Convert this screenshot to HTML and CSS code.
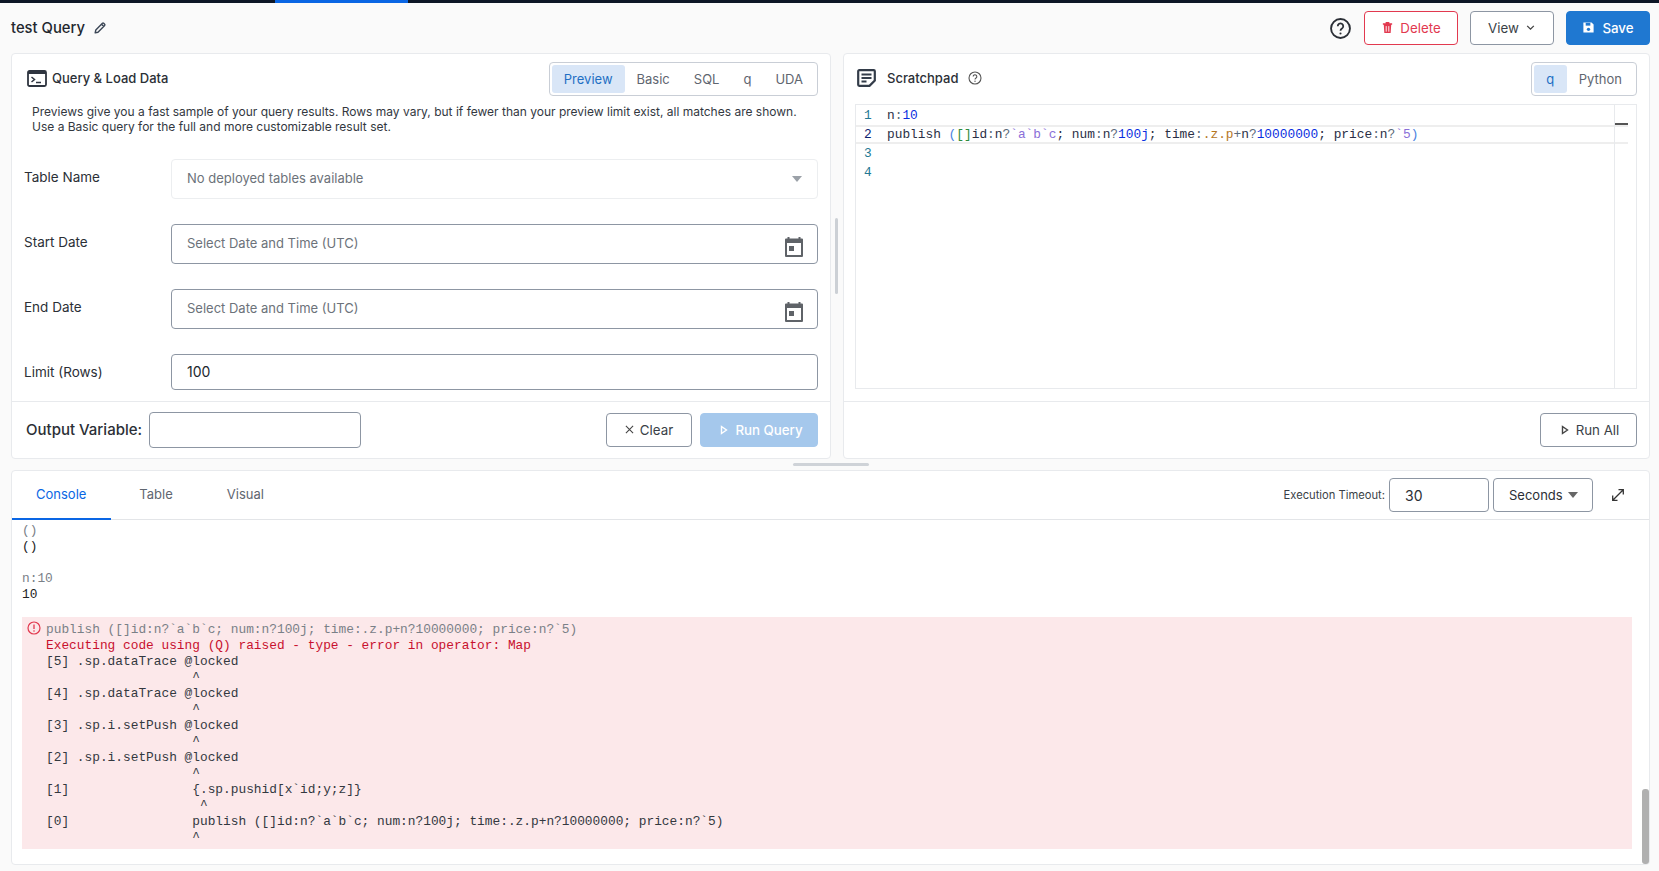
FILE: index.html
```html
<!DOCTYPE html>
<html lang="en">
<head>
<meta charset="utf-8">
<title>test Query</title>
<link rel="stylesheet" href="styles.css">
</head>
<body>
<div class="topbar"><span class="topbar-active"></span></div>
<header class="page-head">
  <div class="title">test Query
    <svg class="pencil" viewBox="0 0 16 16" width="14" height="14"><path d="M2.5 13.5l.7-3.2 7.6-7.6a1 1 0 0 1 1.4 0l1.1 1.1a1 1 0 0 1 0 1.4l-7.6 7.6zM9.8 3.8l2.4 2.4" fill="none" stroke="#3b4656" stroke-width="1.6" stroke-linejoin="round"/></svg>
  </div>
  <div class="actions">
    <svg class="help" viewBox="0 0 20 20" width="21" height="21"><circle cx="10" cy="10" r="9" fill="none" stroke="#2b2f36" stroke-width="1.800"/><path d="M7.400 7.800a2.600 2.600 0 1 1 4 2.200c-.9.600-1.400 1-1.400 2.100" fill="none" stroke="#2b2f36" stroke-width="1.700"/><circle cx="10" cy="14.700" r="1" fill="#2b2f36"/></svg>
    <button class="btn btn-delete"><svg viewBox="0 0 14 14" width="13" height="13"><path d="M3 4h8l-.6 9H3.600zM2 2.500h10V4H2zM5 1h4v1.500H5z" fill="#e2394f"/><path d="M5.600 5.500v6M8.400 5.500v6" stroke="#fff" stroke-width="1"/></svg>Delete</button>
    <button class="btn btn-view">View<svg viewBox="0 0 10 10" width="11" height="11"><path d="M2 3.500l3 3 3-3" fill="none" stroke="#444" stroke-width="1.200"/></svg></button>
    <button class="btn btn-save"><svg viewBox="0 0 14 14" width="13" height="13"><path d="M1.500 1.500h8.800l2.200 2.200v8.800h-11z" fill="#fff"/><path d="M4 2h5v3H4z" fill="#1f78d1"/><circle cx="7" cy="9" r="1.800" fill="#1f78d1"/></svg>Save</button>
  </div>
</header>

<main class="top-panels">
  <section class="card">
    <div class="card-head">
      <div class="card-title">
        <svg viewBox="0 0 20 17" width="20" height="17"><rect x="1" y="1" width="18" height="15" rx="1.500" fill="none" stroke="#2f3540" stroke-width="1.800"/><rect x="1" y="1" width="18" height="3" fill="#2f3540"/><path d="M4.500 7l3 2.500-3 2.500M9 12.500h5" fill="none" stroke="#2f3540" stroke-width="1.500"/></svg>
        <span>Query &amp; Load Data</span>
      </div>
      <div class="seg">
        <span class="seg-item seg-on">Preview</span><span class="seg-item">Basic</span><span class="seg-item">SQL</span><span class="seg-item">q</span><span class="seg-item">UDA</span>
      </div>
    </div>
    <p class="desc">Previews give you a fast sample of your query results. Rows may vary, but if fewer than your preview limit exist, all matches are shown.<br>Use a Basic query for the full and more customizable result set.</p>
    <div class="form">
      <div class="row"><label class="lbl lbl-up">Table Name</label><div class="field field-off"><span class="ph">No deployed tables available</span><i class="caret"></i></div></div>
      <div class="row"><label class="lbl lbl-up">Start Date</label><div class="field"><span class="ph">Select Date and Time (UTC)</span>
        <svg class="cal" viewBox="0 0 18 20" width="18" height="20"><path d="M1 2.500h16V19H1z" fill="none" stroke="#5f6368" stroke-width="2" stroke-linejoin="round"/><path d="M1 2h16v4H1zM2.500 0h2v2h-2zM13.500 0h2v2h-2zM4 9h5v5H4z" fill="#5f6368"/></svg></div></div>
      <div class="row"><label class="lbl lbl-up">End Date</label><div class="field"><span class="ph">Select Date and Time (UTC)</span>
        <svg class="cal" viewBox="0 0 18 20" width="18" height="20"><path d="M1 2.500h16V19H1z" fill="none" stroke="#5f6368" stroke-width="2" stroke-linejoin="round"/><path d="M1 2h16v4H1zM2.500 0h2v2h-2zM13.500 0h2v2h-2zM4 9h5v5H4z" fill="#5f6368"/></svg></div></div>
      <div class="row row-short"><label class="lbl">Limit (Rows)</label><div class="field"><span class="val">100</span></div></div>
    </div>
    <div class="card-foot">
      <label class="out-lbl">Output Variable:</label>
      <div class="out-input"></div>
      <div class="foot-btns">
        <button class="btn btn-clear"><svg viewBox="0 0 10 10" width="9" height="9"><path d="M1 1l8 8M9 1l-8 8" stroke="#444" stroke-width="1.200"/></svg>Clear</button>
        <button class="btn btn-run"><svg viewBox="0 0 10 10" width="10" height="10"><path d="M2.500 1.500l5 3.500-5 3.500z" fill="none" stroke="#fff" stroke-width="1.400"/></svg>Run Query</button>
      </div>
    </div>
  </section>

  <div class="gutter"><span class="gutter-grip"></span></div>

  <section class="card card-right">
    <div class="card-head">
      <div class="card-title">
        <svg viewBox="0 0 19 18" width="19" height="18"><path d="M2.200 1.200h14.600a1 1 0 0 1 1 1V11.500l-5.300 5.300H2.200a1 1 0 0 1-1-1V2.200a1 1 0 0 1 1-1z" fill="none" stroke="#333c49" stroke-width="2.200"/><path d="M4.500 5.500h10M4.500 9h10M4.500 12.500h5" stroke="#333c49" stroke-width="1.800"/></svg>
        <span class="scratch">Scratchpad</span>
        <svg class="mini-help" viewBox="0 0 14 14" width="14" height="14"><circle cx="7" cy="7" r="6" fill="none" stroke="#555" stroke-width="1.100"/><path d="M5.200 5.500a1.800 1.800 0 1 1 2.800 1.500c-.6.400-1 .7-1 1.400" fill="none" stroke="#555" stroke-width="1.100"/><circle cx="7" cy="10.300" r=".7" fill="#555"/></svg>
      </div>
      <div class="seg">
        <span class="seg-item seg-on seg-q">q</span><span class="seg-item">Python</span>
      </div>
    </div>
    <div class="editor">
      <div class="cl"><span class="ln">1</span><span>n<b class="op">:</b><b class="num">10</b></span></div>
      <div class="cl cl-active"><span class="ln ln-on">2</span><span>publish <b class="par">(</b><b class="brk">[]</b>id<b class="op">:</b>n<b class="op">?</b><b class="sym">`a`b`c</b>; num<b class="op">:</b>n<b class="op">?</b><b class="num">100j</b>; time<b class="op">:</b><b class="sys">.z.p</b><b class="op">+</b>n<b class="op">?</b><b class="num">10000000</b>; price<b class="op">:</b>n<b class="op">?</b><b class="sym">`5</b><b class="par">)</b></span></div>
      <div class="cl"><span class="ln">3</span></div>
      <div class="cl"><span class="ln">4</span></div>
      <span class="ruler"></span><span class="ruler-mark"></span>
    </div>
    <div class="card-foot card-foot-end">
      <button class="btn btn-clear btn-all"><svg viewBox="0 0 10 10" width="10" height="10"><path d="M2.500 1.500l5 3.500-5 3.500z" fill="none" stroke="#444" stroke-width="1.400"/></svg>Run All</button>
    </div>
  </section>
</main>

<div class="splitter"><span class="split-grip"></span></div>

<section class="bottom">
  <div class="tabs">
    <span class="tab tab-on">Console</span><span class="tab tab-table">Table</span><span class="tab">Visual</span>
    <div class="tab-tools">
      <span class="exec-lbl">Execution Timeout:</span>
      <div class="tool-box tool-input">30</div>
      <div class="tool-box tool-sel">Seconds<i class="caret caret-dark"></i></div>
      <svg class="expand" viewBox="0 0 14 14" width="14" height="14"><path d="M2 12L12 2M7.500 1.700h4.800v4.800M1.700 7.500v4.800h4.800" fill="none" stroke="#333" stroke-width="1.300"/></svg>
    </div>
  </div>
  <div class="console">
    <div class="block"><div class="in">()</div><div class="outl">()</div></div>
    <div class="block"><div class="in">n:10</div><div class="outl">10</div></div>
    <div class="err">
      <svg class="err-ico" viewBox="0 0 14 14" width="14" height="14"><circle cx="7" cy="7" r="6" fill="none" stroke="#e2394f" stroke-width="1.200"/><path d="M7 3.500v4.500" stroke="#e2394f" stroke-width="1.300"/><circle cx="7" cy="10" r=".8" fill="#e2394f"/></svg>
      <div class="in">publish ([]id:n?`a`b`c; num:n?100j; time:.z.p+n?10000000; price:n?`5)</div>
      <div class="err-msg">Executing code using (Q) raised - type - error in operator: Map</div>
      <div class="outl">[5] .sp.dataTrace @locked
                   ^
[4] .sp.dataTrace @locked
                   ^
[3] .sp.i.setPush @locked
                   ^
[2] .sp.i.setPush @locked
                   ^
[1]                {.sp.pushid[x`id;y;z]}
                    ^
[0]                publish ([]id:n?`a`b`c; num:n?100j; time:.z.p+n?10000000; price:n?`5)
                   ^</div>
    </div>
    <span class="vscroll"></span>
  </div>
</section>
</body>
</html>
```

FILE: styles.css
```css
* { box-sizing: border-box; }
html, body { margin: 0; height: 871px; overflow: hidden; }
body {
  background: #fafafa;
  color: #2b2f36;
  font-family: Inter, Roboto, "Liberation Sans", sans-serif;
  font-size: 13px;
  padding: 0 9px 0 11px;
  display: flex;
  flex-direction: column;
}
.topbar { height: 3px; margin: 0 -9px 0 -11px; background: #0d1726; padding-left: 275px; flex: none; }
.topbar-active { display: block; width: 133px; height: 3px; background: #0a66e4; }

.page-head { height: 50px; flex: none; display: flex; align-items: center; justify-content: space-between; }
.title { font-size: 14.800px; font-weight: 500; color: #23272e; display: flex; align-items: center; gap: 8px; padding-bottom: 1px; }
.actions { display: flex; align-items: center; }
.help { margin-right: 13px; margin-left: -1px; }

.btn {
  height: 34px;
  border-radius: 4px;
  border: 1px solid #8d96a3;
  background: #fff;
  font: inherit;
  font-size: 13.300px;
  color: #3a3f47;
  display: inline-flex;
  align-items: center;
  justify-content: center;
  gap: 6px;
  padding: 0 0 1px;
}
.btn-delete { width: 94px; border-color: #e2394f; color: #e2394f; margin-right: 12px; }
.btn-view { width: 84px; margin-right: 12px; gap: 6px; }
.btn-save { width: 84px; background: #1f78d1; border-color: #1f78d1; color: #fff; font-weight: 500; gap: 7px; }

.top-panels { height: 406px; flex: none; display: flex; }
.card { width: 820px; background: #fff; border: 1px solid #e8eaed; border-radius: 4px; display: flex; flex-direction: column; }
.card-right { width: 807px; }
.gutter { width: 12px; display: flex; justify-content: center; padding-top: 165px; }
.gutter-grip { width: 3px; height: 76px; background: #ccd0d5; border-radius: 2px; margin-left: -1px; }

.card-head { height: 50px; flex: none; padding: 8px 12px 0 15px; display: flex; justify-content: space-between; align-items: flex-start; }
.card-title { display: flex; align-items: center; gap: 5px; height: 32px; font-size: 13px; font-weight: 500; color: #2b2f36; }
.scratch { margin-left: 6px; margin-right: 5px; }
.card-right .card-head { padding-left: 13px; }

.seg { height: 34px; border: 1px solid #c9ced6; border-radius: 4px; padding: 2px; display: flex; color: #5f6670; }
.seg-item { display: flex; align-items: center; padding: 0 12px 1px; border-radius: 3px; font-size: 13px; }
.seg-on { background: #d9e6f7; color: #1f6fc4; }
.seg-q { padding: 0 12.500px 1px; }

.desc { margin: 0; padding: 0 12px 0 20px; font-size: 12px; line-height: 15px; color: #33383f; height: 55px; }

.form { flex: 1; padding: 0 12px; display: flex; flex-direction: column; gap: 25px; }
.row { display: flex; height: 40px; align-items: center; }
.row-short { height: 36px; }
.lbl { width: 147px; flex: none; font-size: 13.500px; color: #2b2f36; }
.lbl-up { margin-top: -4px; }
.field { flex: 1; height: 100%; border: 1px solid #8d96a3; border-radius: 4px; padding: 0 15px; display: flex; align-items: center; justify-content: space-between; }
.field-off { border-color: #eceef0; }
.ph { color: #6c727a; font-size: 13px; margin-top: -2px; }
.val { color: #23272e; font-size: 14px; margin-top: -2px; }
.cal { margin: 5px -1px 0 0; }
.caret { width: 0; height: 0; border-left: 5px solid transparent; border-right: 5px solid transparent; border-top: 6px solid #9ba1a8; }
.caret-dark { border-top-color: #666; }

.card-foot { height: 57px; flex: none; border-top: 1px solid #e8eaed; padding: 0 12px 0 14px; display: flex; align-items: center; }
.card-foot-end { justify-content: flex-end; }
.out-lbl { font-size: 15px; font-weight: 500; color: #2b2f36; margin-right: 8px; width: 115px; white-space: nowrap; padding-bottom: 2px; }
.out-input { width: 212px; height: 36px; border: 1px solid #8d96a3; border-radius: 4px; }
.foot-btns { margin-left: auto; display: flex; gap: 8px; }
.btn-clear { width: 86px; }
.btn-all { width: 97px; padding-left: 2px; }
.btn-run { width: 118px; background: #a5c8ec; border-color: #a5c8ec; color: #fff; font-weight: 500; padding-left: 4px; }

.editor { position: relative; flex: 1; margin: 0 12px 12px 11px; border: 1px solid #e8eaed; padding-top: 1px; font-family: "Liberation Mono", monospace; font-size: 12.830px; color: #2b2f45; }
.cl { height: 19px; display: flex; align-items: center; white-space: pre; }
.cl-active { border-top: 2px solid #eeeeee; border-bottom: 2px solid #eeeeee; margin-right: 8px; position: relative; }
.ln { width: 31px; flex: none; padding-left: 8px; color: #237893; }
.ln-on { color: #0b216f; }
.cl b { font-weight: 400; }
.op { color: #5a6a7a; }
.num { color: #0a2fe0; }
.par { color: #4a7fe0; }
.brk { color: #2e8b3d; }
.sym { color: #8a6fd8; }
.sys { color: #b5771f; }
.ruler { position: absolute; top: 0; bottom: 0; right: 21px; width: 1px; background: #e8eaed; }
.ruler-mark { position: absolute; top: 18px; right: 8px; width: 13px; height: 2px; background: #555; }

.splitter { height: 11px; flex: none; display: flex; justify-content: center; align-items: center; }
.split-grip { width: 76px; height: 3px; background: #cfd3d8; border-radius: 2px; margin-left: 1px; }

.bottom { height: 395px; flex: none; background: #fff; border: 1px solid #e8eaed; border-radius: 4px; display: flex; flex-direction: column; }
.tabs { height: 49px; flex: none; border-bottom: 1px solid #e3e5e8; display: flex; align-items: stretch; }
.tab { padding: 0 27px 2px; display: flex; align-items: center; color: #5f6670; font-size: 13px; }
.tab-on { padding: 0 25px 1px 24px; color: #0a66e4; border-bottom: 2px solid #0a66e4; margin-bottom: -1px; }
.tab-table { margin-left: 1px; }
.tab-tools { margin-left: auto; display: flex; align-items: center; padding-right: 24px; }
.exec-lbl { font-size: 11.200px; color: #3a3f47; margin-right: 4px; }
.tool-box { height: 34px; width: 100px; border: 1px solid #8d96a3; border-radius: 4px; display: flex; align-items: center; padding: 0 15px; font-size: 13px; color: #2b2f36; }
.tool-input { font-size: 14px; }
.tool-sel { margin-left: 4px; gap: 5px; }
.expand { margin-left: 18px; }

.console { position: relative; flex: 1; padding: 3px 17px 0 10px; font-family: "Liberation Mono", monospace; font-size: 12.830px; line-height: 16px; color: #222; }
.block { margin-bottom: 16px; }
.block + .err { margin-top: -2px; }
.in, .outl, .err-msg { white-space: pre; }
.in { color: #7a8087; }
.outl { color: #222; }
.err { position: relative; background: #fce8ea; padding: 5px 0 3px 24px; height: 232px; }
.err-msg { color: #c8102e; }
.err .outl { color: #33383f; }
.err-ico { position: absolute; left: 5px; top: 4px; }
.vscroll { position: absolute; right: 0; bottom: 0; width: 7px; height: 75px; background: #b0b0b0; border-radius: 3px; }
```
